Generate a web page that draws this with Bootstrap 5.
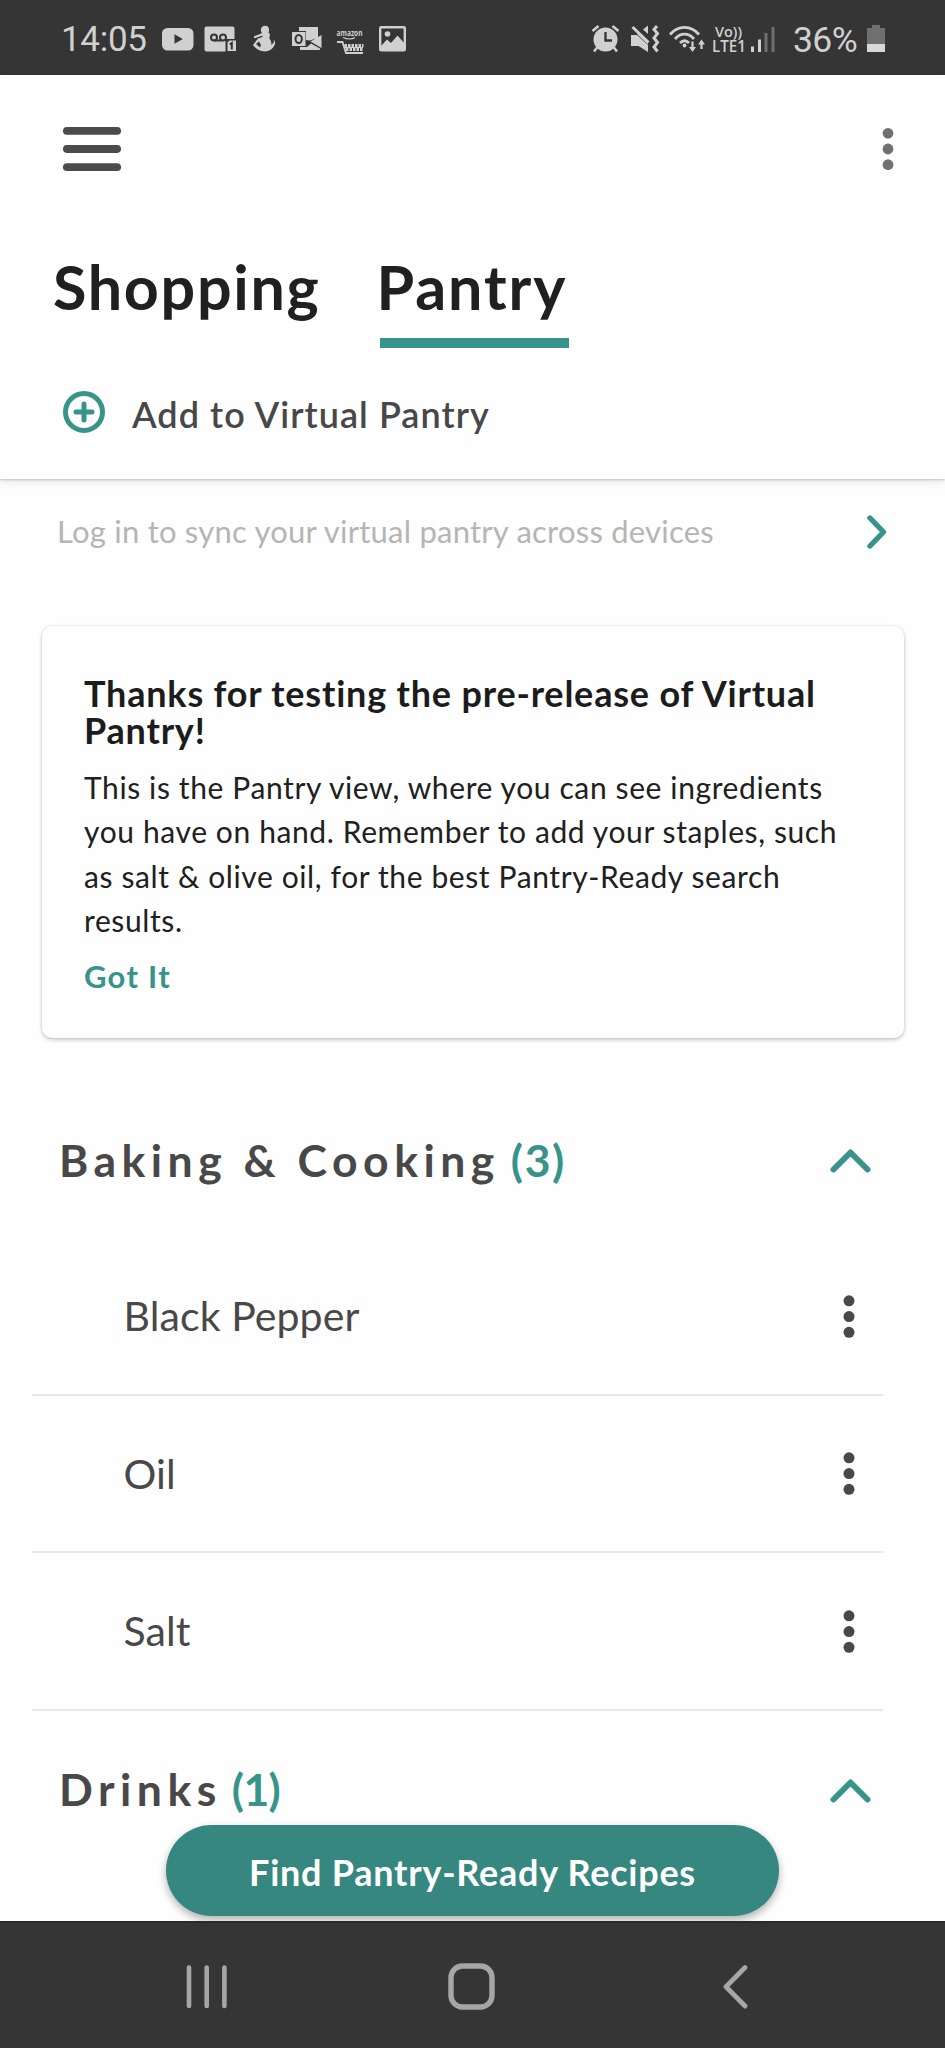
<!DOCTYPE html>
<html lang="en">
<head>
<meta charset="utf-8">
<meta name="viewport" content="width=device-width, initial-scale=1">
<title>Virtual Pantry</title>
<link href="https://cdn.jsdelivr.net/npm/bootstrap@5.3.0/dist/css/bootstrap.min.css" rel="stylesheet">
<style>
:root{--teal:#38938b;--ink:#202020;--gray:#484848;--bar:#353535}
body{font-family:Lato,"Open Sans",sans-serif;background:#fefefe;color:var(--ink);height:2048px;overflow:hidden}
svg{display:block;flex:none}
.status-bar{height:75px;background:var(--bar);color:#d0d0d0;font-family:Roboto,sans-serif;padding:3px 0 0 61px}
.status-bar .clock{width:99px;font-size:35px;line-height:72px;letter-spacing:-.3px;padding-top:1px}
.status-bar .charge{width:73px;font-size:35.500px;line-height:72px;letter-spacing:-.6px;padding-top:1px}
.status-bar svg{margin-top:-1px}
.app-header{height:404px;background:#fefefe;box-shadow:0 1px 2px rgba(0,0,0,.18),0 3px 10px rgba(0,0,0,.1);z-index:1}
.app-top{height:147px;padding:0 51px 0 63px}
.app-tabs{padding:25px 0 0 53px;gap:56px}
.app-tabs .nav-link{padding:0 0 10.5px;color:var(--ink);font-size:61px;font-weight:700;line-height:80px;letter-spacing:1.7px;border:0;border-bottom:10.5px solid transparent;border-radius:0}
.app-tabs .nav-link.active{border-color:var(--teal);width:188.5px;text-indent:-3.5px;letter-spacing:1.9px;white-space:nowrap}
.app-tabs .nav-link:first-child{width:271px}
.add-row{margin-top:26px;height:80px;padding-left:63px;gap:27px;color:var(--gray);font-size:36px;font-weight:600;letter-spacing:1.05px}
.add-row svg{margin-top:-4px}
.sync-row{height:104px;padding:0 57px 0 57px;color:#b5b5b5;font-size:31px;letter-spacing:.23px}
.notice{margin:43px 41px 0 42px;height:412px;padding:49px 42px 0;border:0;border-radius:10px;background:#fefefe;box-shadow:0 2px 4px rgba(0,0,0,.2),0 0 3px rgba(0,0,0,.1)}
.notice h2{font-size:36px;font-weight:700;line-height:37px;letter-spacing:.8px;margin:0 0 16px;color:#1c1c1c}
.notice p{font-size:30px;line-height:44.4px;letter-spacing:.61px;margin:0 -10px 11px 0}
.notice a{font-size:31px;font-weight:700;line-height:44px;letter-spacing:1.3px;color:var(--teal)}
.category{height:80px;padding:0 73px 0 59px;color:var(--gray);font-size:44.5px;font-weight:700;letter-spacing:5.5px}
.category .tally{color:var(--teal);letter-spacing:1.6px;margin-left:11px}
.category .tally-one{letter-spacing:-.6px;margin-left:10px}
.category svg{margin-top:2px}
.first-category{margin-top:82px}
.next-category{margin-top:39px}
.pantry-list{margin:38px 62px 0 32px}
.pantry-list .list-group-item,.pantry-list .list-group-item:last-child{height:157.5px;padding:0 28px 0 91.5px;border:0;border-bottom:2.5px solid #e7e7e7;background:none;color:var(--gray);font-size:41px;letter-spacing:.1px}
.find-btn{left:166px;top:1825px;width:613px;height:91px;background:#358780;color:#fff;font-size:36px;font-weight:700;letter-spacing:.75px;box-shadow:0 4px 8px rgba(0,0,0,.3);padding:3px 0 0;border:0;z-index:2}
.find-btn:hover{background:#358780;color:#fff}
.content-area{height:1442px;overflow:hidden}
.nav-keys{height:127px;background:var(--bar);border-top:2px solid #2a2a2a;padding:0 196px 0 186px;gap:217px;z-index:3}
</style>
</head>
<body class="position-relative d-flex flex-column">

<div class="status-bar d-flex align-items-center">
  <span class="clock">14:05</span>
  <svg width="40" height="36" viewBox="160 20 40 36"><rect x="162" y="27" width="31.500" height="22.500" rx="5.500" fill="#d0d0d0"/><path d="M174.500 33.300v9.400l8.300-4.700z" fill="#353535"/></svg>
  <svg width="44" height="36" viewBox="200 20 44 36"><path d="M206.500 25.500h26a2 2 0 0 1 2 2v10.500h-9v12.500h-19a2 2 0 0 1-2-2v-21a2 2 0 0 1 2-2z" fill="#d0d0d0"/><g fill="none" stroke="#353535" stroke-width="2"><circle cx="214" cy="36.500" r="3"/><circle cx="223" cy="36.500" r="3"/><path d="M214 39.500h8"/></g><path d="M229.500 39h7v11.500h-9.500v-9z" fill="#d0d0d0" stroke="#353535"/><path d="M229.800 43.500l2-1.500v6.500" fill="none" stroke="#353535" stroke-width="2"/></svg>
  <svg width="40" height="36" viewBox="244 20 40 36" fill="#d0d0d0"><circle cx="265" cy="29" r="4.200"/><path d="M262 32l7-.5c1.500 2 .8 4.500.2 6 2 2 2.500 4.500 1.800 6.500l2.500-2 .4-3.500 1.300 3.500c-1 4.500-5 8.500-10.500 8.500-5 0-9.500-3-11.700-6.500l5-6.500 4.500-1.500z"/><path d="M267 26.500l-5 7-7 2.500" fill="none" stroke="#d0d0d0" stroke-width="2.300" stroke-linecap="round"/><path d="M256 43l3-2.500 2 3.500-1 2.500z" fill="#353535"/></svg>
  <svg width="44" height="36" viewBox="284 20 44 36" fill="#d0d0d0"><path d="M299 26h19v10.500l-8 3-4-.5v-9h-7zM321.500 34v13l-11-6.500zM300 46h7l4-3.500 9 5v1.500h-20z"/><path d="M292 31h13.500v14h-13.500z"/><ellipse cx="298.700" cy="38" rx="3.200" ry="3.900" fill="none" stroke="#353535" stroke-width="2"/></svg>
  <svg width="44" height="36" viewBox="328 20 44 36"><text x="336.500" y="35" font-family="Open Sans" font-weight="700" font-size="8" textLength="26" lengthAdjust="spacingAndGlyphs" fill="#d0d0d0">amazon</text><path d="M343 36.500q7 3 12 0" fill="none" stroke="#d0d0d0" stroke-width="1.200"/><path d="M337 41h5.500l3.500 11h17" fill="none" stroke="#d0d0d0" stroke-width="1.800"/><path d="M344.500 44.500h19M346 48.500h17" stroke="#d0d0d0" stroke-width="3" stroke-dasharray="2.500 1"/><path d="M344 46.500h19" stroke="#d0d0d0"/></svg>
  <svg width="40" height="36" viewBox="372 20 40 36"><rect x="380.200" y="26.200" width="24.600" height="23" rx="1" fill="none" stroke="#d0d0d0" stroke-width="2.400"/><circle cx="387.500" cy="33" r="2.800" fill="#d0d0d0"/><path d="M381 45l6-6.500 4 3.500 6.500-7.500 7.500 8.500v6h-24z" fill="#d0d0d0"/></svg>

  <div class="d-flex align-items-center ms-auto">
  <svg width="38" height="36" viewBox="587 20 38 36"><circle cx="604.500" cy="38.500" r="12" fill="#d0d0d0"/><path d="M596.500 46l-3.500 4.500M612.500 46l3.500 4.500M591.500 30l6-5M617.500 30l-6-5" stroke="#d0d0d0" stroke-width="2.600"/><path d="M604.500 31v8.500h6.500" fill="none" stroke="#353535" stroke-width="2.300"/></svg>
  <svg width="38" height="36" viewBox="625 20 38 36"><path d="M630 34h6l11 10v7l-9.500-6h-7.500z M636 33l11 10.500v-1l-8-9z M642 28.500l5-4v8.500z" fill="#d0d0d0"/><path d="M631.500 26l16 15.500" stroke="#d0d0d0" stroke-width="3"/><path d="M656 25l-3 3.500 3.500 4-3.500 4.500 3.500 4.500-3.500 4.500 3.500 4.500" fill="none" stroke="#d0d0d0" stroke-width="3"/></svg>
  <svg width="44" height="36" viewBox="663 20 44 36" fill="none" stroke="#d0d0d0" stroke-width="2.800"><path d="M669 33.500c8-9.500 21-9.500 29 0M674 38c5.500-6.500 13.500-6.500 19 0M679 42c3-3 6-3 9 0"/><circle cx="683.500" cy="44.500" r="1.900" fill="#d0d0d0" stroke="none"/><path d="M691.500 40.500v8M700.500 48v-8" stroke-width="2.200"/><path d="M688 46h7l-3.500 5zM697 43.500h7l-3.500-5z" fill="#d0d0d0" stroke="none"/></svg>
  <svg width="40" height="36" viewBox="707 20 40 36" fill="#d0d0d0" font-family="Open Sans" font-weight="600"><text x="714" y="36" font-size="14.500" textLength="27" lengthAdjust="spacingAndGlyphs">Vo))</text><text x="711" y="51" font-size="15.500" textLength="34" lengthAdjust="spacingAndGlyphs">LTE1</text></svg>
  <svg width="45" height="36" viewBox="748 20 45 36"><path d="M752.500 45.500v5.500M759.500 38.500v12.500" stroke="#d0d0d0" stroke-width="3"/><path d="M766 32v19M773 26v25" stroke="#707070" stroke-width="3"/></svg>
  <span class="charge">36%</span>
  <svg width="79" height="36" viewBox="866 20 79 36"><path d="M867 27h5v-3h8v3h5v16h-18z" fill="#707070"/><path d="M867 43h18v8h-18z" fill="#d8d8d8"/></svg>
  </div>
</div>

<header class="app-header position-relative">
  <div class="app-top d-flex align-items-center justify-content-between">
    <svg width="58" height="46" viewBox="0 0 58 46" fill="#4b4b4b"><rect y="1" width="58" height="7.800" rx="3.800"/><rect y="19.100" width="58" height="7.800" rx="3.800"/><rect y="37.200" width="58" height="7.800" rx="3.800"/></svg>
    <svg width="12" height="44" viewBox="0 0 12 44" fill="#707070"><circle cx="6" cy="6.300" r="5.400"/><circle cx="6" cy="22" r="5.400"/><circle cx="6" cy="37.700" r="5.400"/></svg>
  </div>
  <nav class="nav app-tabs flex-nowrap">
    <a class="nav-link" href="#">Shopping</a>
    <a class="nav-link active" href="#">Pantry</a>
  </nav>
  <div class="add-row d-flex align-items-center">
    <svg width="42" height="42" viewBox="0 0 42 42" fill="none" stroke="#38938b" stroke-width="5" stroke-linecap="round"><circle cx="21" cy="21" r="18.500"/><path d="M21 13v16M13 21h16"/></svg>
    <span>Add to Virtual Pantry</span>
  </div>
</header>

<main class="content-area">
  <div class="sync-row d-flex align-items-center justify-content-between">
    <span>Log in to sync your virtual pantry across devices</span>
    <svg width="22" height="36" viewBox="0 0 22 36" fill="none" stroke="#38938b" stroke-width="5.400" stroke-linecap="round" stroke-linejoin="round"><path d="M4 5l13.500 14-13.500 14"/></svg>
  </div>

  <section class="card notice">
    <h2>Thanks for testing the pre-release of Virtual<br>Pantry!</h2>
    <p>This is the Pantry view, where you can see ingredients<br>you have on hand. Remember to add your staples, such<br>as salt &amp; olive oil, for the best Pantry-Ready search<br>results.</p>
    <a class="text-decoration-none" href="#">Got It</a>
  </section>

  <div class="category first-category d-flex align-items-center">
    <span>Baking &amp; Cooking</span><span class="tally">(3)</span>
    <svg class="ms-auto" width="43" height="28" viewBox="0 0 43 28" fill="none" stroke="#38938b" stroke-width="6" stroke-linecap="round" stroke-linejoin="round"><path d="M4.500 22.500l17-17 17 17"/></svg>
  </div>
  <ul class="list-group list-group-flush pantry-list">
    <li class="list-group-item d-flex align-items-center justify-content-between">Black Pepper
      <svg width="12" height="44" viewBox="0 0 12 44" fill="#484848"><circle cx="6" cy="6.800" r="5.500"/><circle cx="6" cy="22.600" r="5.500"/><circle cx="6" cy="38.300" r="5.500"/></svg></li>
    <li class="list-group-item d-flex align-items-center justify-content-between">Oil
      <svg width="12" height="44" viewBox="0 0 12 44" fill="#484848"><circle cx="6" cy="6.800" r="5.500"/><circle cx="6" cy="22.600" r="5.500"/><circle cx="6" cy="38.300" r="5.500"/></svg></li>
    <li class="list-group-item d-flex align-items-center justify-content-between">Salt
      <svg width="12" height="44" viewBox="0 0 12 44" fill="#484848"><circle cx="6" cy="6.800" r="5.500"/><circle cx="6" cy="22.600" r="5.500"/><circle cx="6" cy="38.300" r="5.500"/></svg></li>
  </ul>
  <div class="category next-category d-flex align-items-center">
    <span>Drinks</span><span class="tally tally-one">(1)</span>
    <svg class="ms-auto" width="43" height="28" viewBox="0 0 43 28" fill="none" stroke="#38938b" stroke-width="6" stroke-linecap="round" stroke-linejoin="round"><path d="M4.500 22.500l17-17 17 17"/></svg>
  </div>
</main>
<button class="btn rounded-pill find-btn position-absolute">Find Pantry-Ready Recipes</button>

<footer class="nav-keys position-relative d-flex align-items-center">
  <svg width="42" height="46" viewBox="0 0 42 46" stroke="#a6a6a6" stroke-width="4.600" stroke-linecap="round"><path d="M3 4.500v38.500M20.700 4.500v38.500M38.400 4.500v38.500"/></svg>
  <svg width="52" height="48" viewBox="-2 0 52 48" fill="none" stroke="#a6a6a6" stroke-width="5.400"><rect x="4" y="4" width="41" height="41" rx="11.500"/></svg>
  <svg class="ms-auto" width="27" height="46" viewBox="0 0 27 46" fill="none" stroke="#a6a6a6" stroke-width="4.800" stroke-linecap="round" stroke-linejoin="round"><path d="M23 4.500l-19 19.300 19 19.200"/></svg>
</footer>
<script src="https://cdn.jsdelivr.net/npm/bootstrap@5.3.0/dist/js/bootstrap.bundle.min.js"></script>
</body>
</html>
